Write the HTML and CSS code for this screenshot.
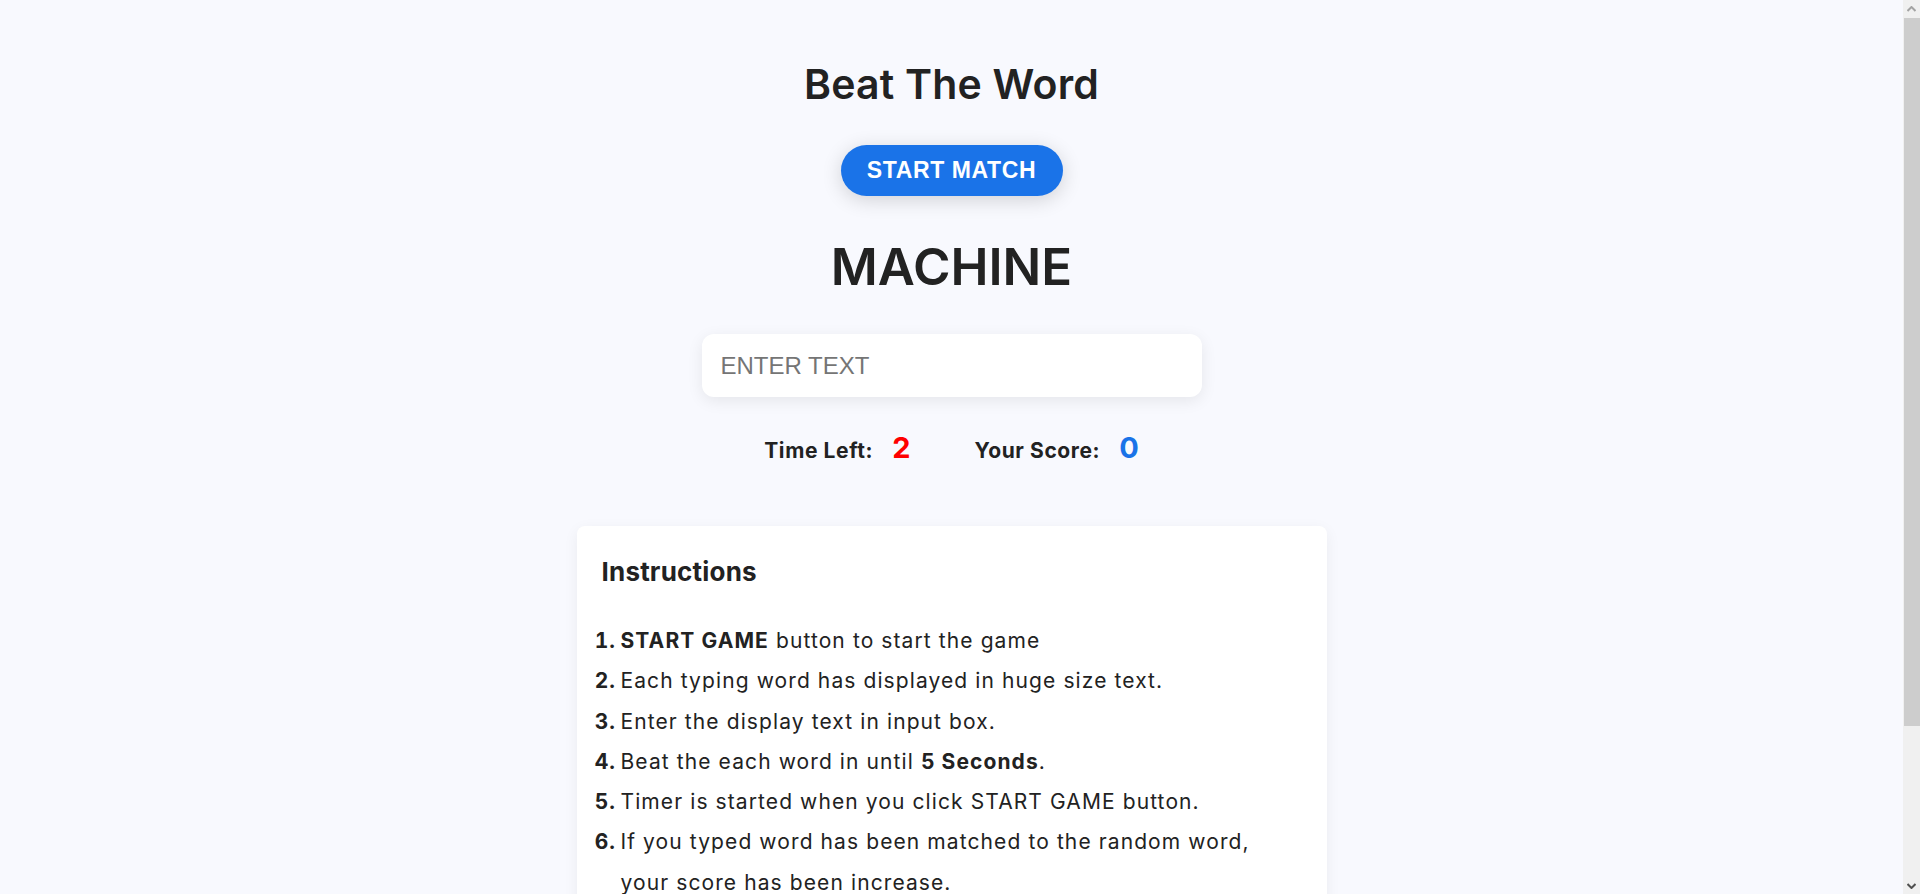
FILE: index.html
```html
<!DOCTYPE html>
<html lang="en">
<head>
<meta charset="utf-8">
<title>Beat The Word</title>
<link rel="stylesheet" href="styles.css">
</head>
<body>
<main class="page">
  <h1 class="title">Beat The Word</h1>
  <button class="start-btn" type="button">START MATCH</button>
  <h2 class="word">MACHINE</h2>
  <input class="word-input" type="text" placeholder="ENTER TEXT">
  <div class="stats">
    <div class="stat"><span class="stat-label">Time Left:</span><span class="stat-value time">2</span></div>
    <div class="stat"><span class="stat-label">Your Score:</span><span class="stat-value score">0</span></div>
  </div>
  <section class="card">
    <h3 class="card-title">Instructions</h3>
    <ol class="steps">
      <li><b>START GAME</b> button to start the game</li>
      <li>Each typing word has displayed in huge size text.</li>
      <li>Enter the display text in input box.</li>
      <li>Beat the each word in until <b>5 Seconds</b>.</li>
      <li>Timer is started when you click START GAME button.</li>
      <li>If you typed word has been matched to the random word, your score has been increase.</li>
    </ol>
  </section>
</main>
<div class="scrollbar" aria-hidden="true">
  <div class="sb-btn">
    <svg width="9" height="6" viewBox="0 0 9 6"><path d="M0.5 5 L4.5 1 L8.5 5" fill="none" stroke="#a3a3a3" stroke-width="2"/></svg>
  </div>
  <div class="sb-track">
    <div class="sb-thumb"></div>
  </div>
  <div class="sb-btn">
    <svg width="9" height="6" viewBox="0 0 9 6"><path d="M0.5 1 L4.5 5 L8.5 1" fill="none" stroke="#505050" stroke-width="2"/></svg>
  </div>
</div>
</body>
</html>
```

FILE: styles.css
```css
* { box-sizing: border-box; }

html, body {
  margin: 0;
  padding: 0;
}

body {
  background: #f8f9fe;
  color: #222222;
  font-family: "Inter", "Open Sans", sans-serif;
  padding-right: 17px;
}

.page {
  display: flex;
  flex-direction: column;
  align-items: center;
  padding-top: 60px;
  padding-bottom: 40px;
}

.title {
  margin: 0;
  font-size: 41px;
  line-height: 48px;
  font-weight: 600;
  letter-spacing: 0.2px;
}

.start-btn {
  margin-top: 37px;
  height: 51px;
  width: 222px;
  border: none;
  border-radius: 26px;
  background: #1a73e8;
  color: #ffffff;
  font-family: "Liberation Sans", Arial, sans-serif;
  font-weight: 700;
  font-size: 23px;
  letter-spacing: 0.6px;
  box-shadow: 0 4px 20px rgba(0, 0, 0, 0.16);
  cursor: pointer;
}

.word {
  margin: 41px 0 0;
  font-size: 51px;
  line-height: 60px;
  font-weight: 600;
}

.word-input {
  margin-top: 37px;
  width: 500px;
  height: 63px;
  border: none;
  border-radius: 12px;
  background: #ffffff;
  box-shadow: 0 4px 16px rgba(0, 0, 0, 0.08);
  padding: 0 19px;
  font-family: "Liberation Sans", Arial, sans-serif;
  font-size: 24px;
  color: #222;
  outline: none;
}

.word-input::placeholder {
  color: #757575;
}

.stats {
  margin-top: 33px;
  display: flex;
  gap: 64px;
  align-items: baseline;
}

.stat {
  display: flex;
  align-items: baseline;
  gap: 19px;
}

.stat-label {
  font-size: 21px;
  font-weight: 700;
  letter-spacing: 0.6px;
  line-height: 36px;
}

.stat-value {
  font-size: 29px;
  font-weight: 700;
  line-height: 36px;
}

.time { color: #ff0000; }
.score { color: #1a73e8; }

.card {
  margin-top: 57px;
  width: 750px;
  min-height: 520px;
  background: #ffffff;
  border-radius: 8px;
  box-shadow: 0 4px 15px rgba(0, 0, 0, 0.06);
  padding: 30px 25px 30px;
}

.card-title {
  margin: 0;
  font-size: 26px;
  line-height: 32px;
  font-weight: 700;
  letter-spacing: 0.2px;
}

.steps {
  margin: 33px 0 0;
  padding-left: 19px;
  font-size: 21px;
  letter-spacing: 1.1px;
  line-height: 40.3px;
}

.steps li::marker {
  content: counter(list-item) ".\2009";
  font-weight: 700;
}

.steps b {
  font-weight: 700;
}

.scrollbar {
  position: fixed;
  top: 0;
  right: 0;
  width: 17px;
  height: 100vh;
  background: #f0f0f0;
  display: flex;
  flex-direction: column;
}

.sb-btn {
  height: 17px;
  display: flex;
  align-items: center;
  justify-content: center;
  flex: none;
}

.sb-track {
  flex: 1;
  padding-top: 1px;
}

.sb-thumb {
  margin-left: 1px;
  width: 16px;
  height: 708px;
  background: #cdcdcd;
}
```
